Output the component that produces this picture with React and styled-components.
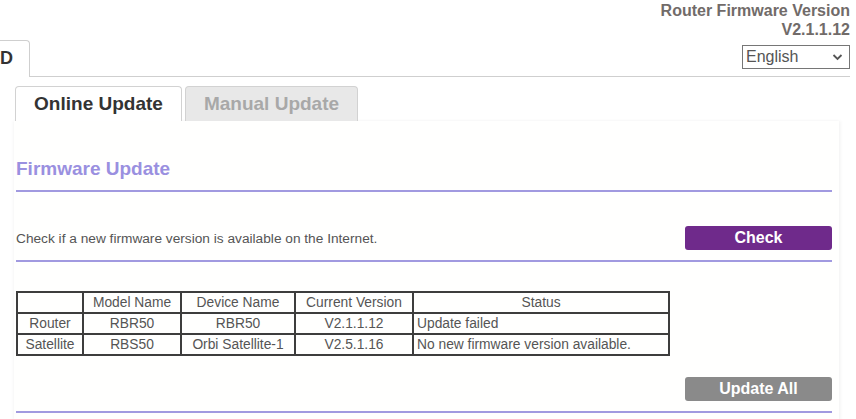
import * as React from "react"
import styled, { createGlobalStyle } from "styled-components"

const GlobalStyle = createGlobalStyle`
  body {
    margin: 0;
    background: #ffffff;
    font-family: "Liberation Sans", Arial, sans-serif;
  }
`

const Page = styled.div`
  width: 856px;
  height: 419px;
  overflow: hidden;
`

const TopBar = styled.div`
  display: flex;
  justify-content: space-between;
  align-items: flex-end;
  margin-right: 6px;
  border-bottom: 1px solid #cfcfcf;
  height: 76px;
`

const TopTab = styled.div`
  width: 30px;
  box-sizing: border-box;
  border: 1px solid #cfcfcf;
  border-left: none;
  border-bottom: none;
  border-top-right-radius: 4px;
  background: #fff;
  margin-bottom: -1px;
  height: 37px;
  font-size: 18px;
  font-weight: bold;
  color: #333;
  line-height: 34px;
`

const VersionBlock = styled.div`
  align-self: flex-start;
  text-align: right;
  padding-top: 1px;
`

const VersionText = styled.div`
  font-size: 16px;
  font-weight: bold;
  line-height: 19px;
  color: #716b69;
`

const LangSelect = styled.div`
  margin-top: 6px;
  margin-left: auto;
  width: 108px;
  height: 24px;
  box-sizing: border-box;
  border: 1px solid #767676;
  display: flex;
  align-items: center;
  justify-content: space-between;
  padding: 0 6px 0 3px;
  font-size: 16px;
  color: #555;
`

const SubTabs = styled.div`
  display: flex;
  gap: 3px;
  margin: 9px 0 0 15px;
`

const SubTab = styled.div`
  height: 35px;
  box-sizing: border-box;
  width: ${p => p.$w}px;
  border: 1px solid #d2d2d2;
  border-bottom: none;
  border-radius: 4px 4px 0 0;
  background: ${p => (p.$active ? "#fff" : "#e8e8e8")};
  color: ${p => (p.$active ? "#333" : "#a8a8a8")};
  font-size: 19px;
  font-weight: bold;
  display: flex;
  align-items: center;
  justify-content: center;
`

const Panel = styled.div`
  margin-left: 14px;
  width: 825px;
  height: 300px;
  background: #fffffe;
  box-shadow: -1px 0 3px rgba(0, 0, 0, 0.04), 2px 0 3px rgba(0, 0, 0, 0.04);
  padding: 0 7px 0 2px;
  box-sizing: border-box;
`

const SectionTitle = styled.div`
  padding-top: 37px;
  font-size: 19px;
  font-weight: bold;
  line-height: 22px;
  color: #9a90e0;
`

const Rule = styled.div`
  height: 2px;
  background: #a19ae0;
  margin-top: ${p => p.$top}px;
`

const ActionRow = styled.div`
  display: flex;
  justify-content: space-between;
  align-items: center;
  margin-top: ${p => p.$top}px;
`

const Hint = styled.span`
  font-size: 13.7px;
  color: #555;
`

const Button = styled.button`
  width: 147px;
  height: 24px;
  border: none;
  border-radius: 3px;
  background: ${p => (p.$disabled ? "#8a8a8a" : "#6f2a8b")};
  color: #fff;
  font-family: "Liberation Sans", Arial, sans-serif;
  font-size: 16px;
  font-weight: bold;
  padding: 0;
`

const Table = styled.table`
  margin-top: 29px;
  border-collapse: collapse;
  border: 2px solid #3d3d3d;
  font-size: 13.8px;
  color: #555;
`

const Cell = styled.td`
  border: 2px solid #3d3d3d;
  height: 19px;
  padding: 0 3px;
  line-height: 19px;
  width: ${p => p.$w}px;
  text-align: ${p => (p.$left ? "left" : "center")};
  box-sizing: border-box;
`

const rows = [
  ["Router", "RBR50", "RBR50", "V2.1.1.12", "Update failed"],
  ["Satellite", "RBS50", "Orbi Satellite-1", "V2.5.1.16", "No new firmware version available."],
]

const widths = [66, 98, 114, 118, 256]

const App = () => {
  return (
    <Page>
      <GlobalStyle />
      <TopBar>
        <TopTab>D</TopTab>
        <VersionBlock>
          <VersionText>Router Firmware Version</VersionText>
          <VersionText>V2.1.1.12</VersionText>
          <LangSelect>
            <span>English</span>
            <svg width="11" height="8" viewBox="0 0 11 8">
              <path d="M1.5 2 L5.5 6 L9.5 2" fill="none" stroke="#555" strokeWidth="1.8" />
            </svg>
          </LangSelect>
        </VersionBlock>
      </TopBar>

      <SubTabs>
        <SubTab $active $w={167}>Online Update</SubTab>
        <SubTab $w={173}>Manual Update</SubTab>
      </SubTabs>

      <Panel>
        <SectionTitle>Firmware Update</SectionTitle>
        <Rule $top={10} />
        <ActionRow $top={34}>
          <Hint>Check if a new firmware version is available on the Internet.</Hint>
          <Button>Check</Button>
        </ActionRow>
        <Rule $top={10} />
        <Table>
          <tbody>
            <tr>
              <Cell $w={widths[0]}></Cell>
              <Cell $w={widths[1]}>Model Name</Cell>
              <Cell $w={widths[2]}>Device Name</Cell>
              <Cell $w={widths[3]}>Current Version</Cell>
              <Cell $w={widths[4]}>Status</Cell>
            </tr>
            {rows.map(r => (
              <tr key={r[0]}>
                {r.map((c, i) => (
                  <Cell key={i} $w={widths[i]} $left={i === 4}>{c}</Cell>
                ))}
              </tr>
            ))}
          </tbody>
        </Table>
        <ActionRow $top={21}>
          <span />
          <Button $disabled>Update All</Button>
        </ActionRow>
        <Rule $top={10} />
      </Panel>
    </Page>
  )
}

export default App
